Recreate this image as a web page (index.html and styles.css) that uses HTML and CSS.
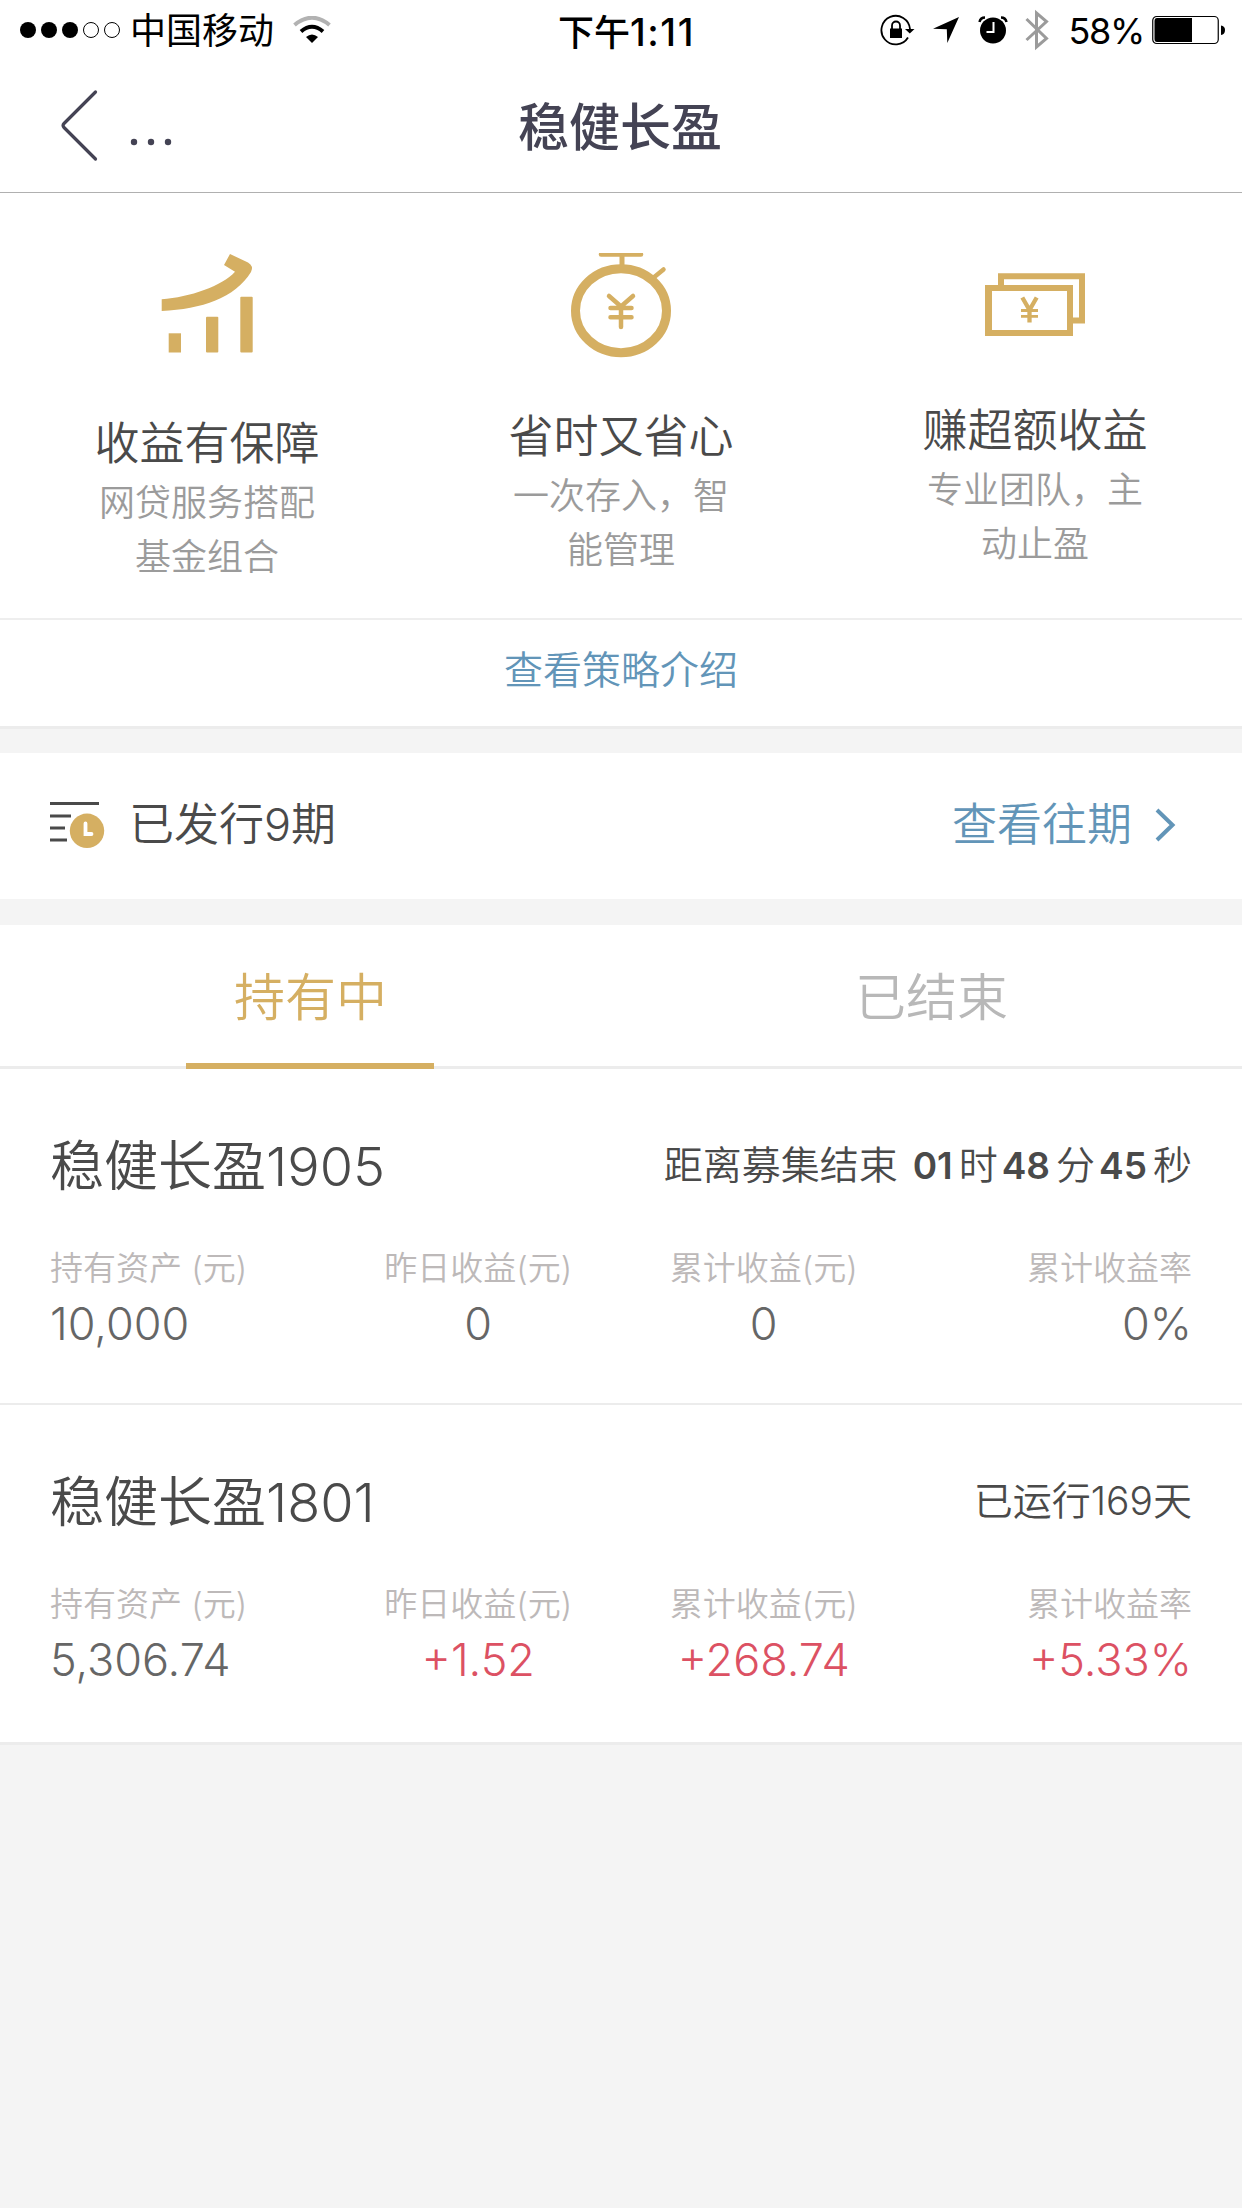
FILE: index.html
```
<!DOCTYPE html>
<html lang="zh-CN">
<head>
    <meta charset="UTF-8">
    <meta name="viewport" content="width=device-width, initial-scale=1.0">
    <title>稳健长盈</title>
    <link rel="stylesheet" href="styles.css">
</head>
<body>

<div class="status-bar">
    <div class="status-left">
        <svg class="signal" width="102" height="18" viewBox="0 0 102 18">
            <circle cx="9" cy="9" r="8"/>
            <circle cx="30" cy="9" r="8"/>
            <circle cx="51" cy="9" r="8"/>
            <circle cx="72" cy="9" r="7.5" fill="none" stroke="#000"/>
            <circle cx="93" cy="9" r="7.5" fill="none" stroke="#000"/>
        </svg>
        <span class="carrier">中国移动</span>
        <svg class="wifi" width="38" height="28" viewBox="0 0 38 28">
            <path d="M1.5 9 Q19 -5.5 36.500 9" fill="none" stroke="#b2b2b2" stroke-width="4"/>
            <path d="M8 15.500 Q19 6 30 15.500" fill="none" stroke="#000" stroke-width="4"/>
            <path d="M13 21 Q19 16 25 21 L19 27 Z"/>
        </svg>
    </div>
    <div class="status-time">下午<span class="clock">1:11</span></div>
    <div class="status-right">
        <svg class="lock" width="36" height="32" viewBox="0 0 36 32">
            <path d="M28 23.500 A14.300 14.300 0 1 1 30 15" fill="none" stroke="#000" stroke-width="1.800"/>
            <path d="M25 15 H34.500 L29.800 19.500 Z"/>
            <rect x="10" y="14.500" width="12" height="9.500"/>
            <path d="M12 15 V11.500 a4 4 0 0 1 8 0 V15" fill="none" stroke="#000" stroke-width="1.800"/>
        </svg>
        <svg class="location" width="28" height="28" viewBox="0 0 28 28">
            <path d="M27 1 L15.300 27 L14.800 13.200 L1 12.700 Z"/>
        </svg>
        <svg class="alarm" width="30" height="28" viewBox="0 0 30 28">
            <circle cx="15" cy="14.500" r="13"/>
            <path d="M1.500 6 Q2.500 1.500 7 1.500 M23 1.500 Q27.500 1.500 28.500 6" fill="none" stroke="#000" stroke-width="2.500"/>
            <path d="M15.500 6 V16 H8.500" fill="none" stroke="#fff" stroke-width="2"/>
        </svg>
        <svg class="bluetooth" width="24" height="42" viewBox="0 0 24 42">
            <path d="M1.500 10 L21.500 29.500 L11.500 38 V4 L21.500 12.500 L1.500 31" fill="none" stroke="#9b9b9b" stroke-width="3"/>
        </svg>
        <span class="percent">58%</span>
        <svg class="battery" width="74" height="30" viewBox="0 0 74 30">
            <rect x="0.750" y="1.500" width="65.500" height="27" rx="4" fill="none" stroke="#000" stroke-width="1.200"/>
            <path d="M2.500 6 Q2.500 3 5 3 H40 V27 H5 Q2.500 27 2.500 24 Z"/>
            <path d="M69 10.500 Q73 11 73 15 Q73 19.500 69 20 Z"/>
        </svg>
    </div>
</div>

<div class="header">
    <a class="back" href="#">
        <svg width="38" height="74" viewBox="0 0 38 74">
            <path d="M35.500 3 L4 34.500 Q2 36.500 4 38.500 L35.500 70" fill="none" stroke="#444354" stroke-width="3.200" stroke-linecap="round"/>
        </svg>
        <svg class="dots" width="42" height="8" viewBox="0 0 42 8">
            <circle cx="4" cy="4" r="3.200"/>
            <circle cx="21" cy="4" r="3.200"/>
            <circle cx="38" cy="4" r="3.200"/>
        </svg>
    </a>
    <h1>稳健长盈</h1>
</div>

<div class="features">
    <div class="feature">
        <div class="feature-icon">
            <svg width="94" height="101" viewBox="0 0 94 101">
                <path d="M1.700 46.300 C30 44 62 33 75 18.700 L64 12 L70 1 L88 9.500 Q94 13 91 19 C75 45 42 56 1.700 58 Z" fill="#d5af62"/>
                <rect x="8.700" y="80.300" width="12.300" height="19.200" fill="#d5af62"/>
                <rect x="46" y="63.700" width="12.300" height="35.800" rx="1" fill="#d5af62"/>
                <rect x="80.300" y="43.700" width="12.400" height="55.800" rx="1" fill="#d5af62"/>
            </svg>
        </div>
        <h3>收益有保障</h3>
        <p>网贷服务搭配基金组合</p>
    </div>
    <div class="feature feature-time">
        <div class="feature-icon">
            <svg width="102" height="106" viewBox="0 0 102 106">
                <g fill="none" stroke="#d5af62" stroke-linecap="round">
                    <ellipse cx="51" cy="57.700" rx="45.500" ry="42" stroke-width="9"/>
                    <path d="M31 1.500 H71" stroke-width="4.500"/>
                    <path d="M52 2 V14" stroke-width="5"/>
                    <path d="M84 24.300 L93.500 16.500" stroke-width="4.500"/>
                    <path d="M39 43 L51 53.500 L63 43 M51 53.500 V74 M40.500 55 H61.500 M40.500 64.300 H61.500" stroke-width="4.500"/>
                </g>
            </svg>
        </div>
        <h3>省时又省心</h3>
        <p>一次存入，智能管理</p>
    </div>
    <div class="feature feature-profit">
        <div class="feature-icon">
            <svg width="100" height="63" viewBox="0 0 100 63">
                <path d="M16 15 V3.200 H97 V47.500 H86" fill="none" stroke="#d5af62" stroke-width="6"/>
                <path d="M0 12 H88 V63 H0 Z M7 18 V57 H82 V18 Z" fill="#d5af62" fill-rule="evenodd"/>
                <path d="M37.300 24.500 L44.500 37 L51.700 24.500 M44.500 36 V49.500" fill="none" stroke="#d5af62" stroke-width="4.300"/>
                <path d="M36 37.500 H53 M36 43.300 H53" fill="none" stroke="#d5af62" stroke-width="2.800"/>
            </svg>
        </div>
        <h3>赚超额收益</h3>
        <p>专业团队，主动止盈</p>
    </div>
</div>
<a class="strategy-link" href="#">查看策略介绍</a>

<div class="issued">
    <svg class="issued-icon" width="56" height="48" viewBox="0 0 56 48">
        <path d="M0 1.500 H49" stroke="#4a4a4a" stroke-width="3.200"/>
        <path d="M0 14 H21 M0 26 H15 M0 38 H17" stroke="#4a4a4a" stroke-width="2.800"/>
        <circle cx="37" cy="28.800" r="17.200" fill="#d5af62"/>
        <path d="M35.500 21.500 V32 H41.500" fill="none" stroke="#fff" stroke-width="3.800" stroke-linecap="round"/>
    </svg>
    <span>已发行9期</span>
    <a class="history-link" href="#">查看往期
        <svg width="22" height="34" viewBox="0 0 22 34">
            <path d="M2 2 L17.500 17 L2 32" fill="none" stroke="#6295b8" stroke-width="4"/>
        </svg>
    </a>
</div>

<div class="tabs">
    <a class="tab active" href="#">持有中</a>
    <a class="tab" href="#">已结束</a>
</div>

<div class="product">
    <div class="product-top">
        <h2>稳健长盈1905</h2>
        <div class="countdown">距离募集结束 <b>01</b>时<b>48</b>分<b>45</b>秒</div>
    </div>
    <div class="product-data">
        <div class="item"><label>持有资产 (元)</label><span>10,000</span></div>
        <div class="item"><label>昨日收益(元)</label><span>0</span></div>
        <div class="item"><label>累计收益(元)</label><span>0</span></div>
        <div class="item"><label>累计收益率</label><span>0%</span></div>
    </div>
</div>

<div class="product last">
    <div class="product-top">
        <h2>稳健长盈1801</h2>
        <div class="running">已运行169天</div>
    </div>
    <div class="product-data">
        <div class="item"><label>持有资产 (元)</label><span>5,306.74</span></div>
        <div class="item"><label>昨日收益(元)</label><span class="up">+1.52</span></div>
        <div class="item"><label>累计收益(元)</label><span class="up">+268.74</span></div>
        <div class="item"><label>累计收益率</label><span class="up">+5.33%</span></div>
    </div>
</div>

</body>
</html>
```
FILE: styles.css
```
* {
    box-sizing: border-box;
}

body {
    font-family: Inter, "Noto Sans CJK SC", sans-serif;
    font-weight: 350;
    background-color: #f4f4f4;
    color: #4a4a4a;
    margin: 0;
}

h1, h2, h3, p {
    margin: 0;
}

a {
    text-decoration: none;
}

svg {
    display: block;
    flex-shrink: 0;
}

/* status bar */
.status-bar {
    display: grid;
    grid-template-columns: 1fr auto 1fr;
    height: 60px;
    padding: 0 16px 0 19px;
    background-color: #fff;
    color: #000;
    font-size: 36px;
    line-height: 64px;
    font-weight: 400;
}

.status-left, .status-right {
    display: flex;
    align-items: center;
    height: 60px;
}

.status-right {
    justify-content: flex-end;
}

.carrier {
    padding-top: 2px;
    margin-left: 9px;
}

.wifi {
    margin-left: 19px;
}

.status-time {
    padding-left: 8px;
    font-weight: 500;
}

.clock {
    font-size: 38px;
    letter-spacing: 1.5px;
}

.location {
    margin-left: 16px;
}

.alarm {
    margin-left: 18px;
}

.bluetooth {
    margin-left: 17px;
}

.percent {
    padding-top: 2px;
    margin-left: 19px;
    letter-spacing: -1.3px;
}

.battery {
    margin-left: 8px;
}

/* header */
.header {
    display: grid;
    grid-template-columns: 1fr auto 1fr;
    align-items: center;
    height: 133px;
    padding: 0 62px 0 60px;
    background-color: #fff;
    border-bottom: 1px solid #b0b0b0;
}

.back {
    display: flex;
    align-items: center;
}

.dots {
    margin: 32px 0 0 32px;
    fill: #444354;
}

.header h1 {
    padding-top: 4px;
    font-size: 51px;
    line-height: 70px;
    font-weight: 500;
    color: #444354;
}

/* features */
.features {
    display: grid;
    grid-template-columns: repeat(3, 1fr);
    height: 427px;
    background-color: #fff;
    border-bottom: 2px solid #eee;
    text-align: center;
}

.feature {
    padding-top: 60px;
}

.feature-icon {
    display: flex;
    justify-content: center;
    height: 164px;
}

.feature-time .feature-icon {
    height: 157px;
}

.feature-profit {
    padding-top: 80px;
}

.feature-profit .feature-icon {
    height: 131px;
}

.feature h3 {
    font-size: 45px;
    line-height: 54px;
    font-weight: 350;
}

.feature p {
    width: 220px;
    margin: 5px auto 0;
    font-size: 36px;
    line-height: 54px;
    color: #9b9b9b;
}

.strategy-link {
    display: block;
    height: 109px;
    background-color: #fff;
    border-bottom: 3px solid #ececec;
    color: #6295b8;
    font-size: 39px;
    line-height: 100px;
    text-align: center;
}

/* issued periods */
.issued {
    display: flex;
    align-items: center;
    height: 146px;
    margin: 24px 0 26px;
    padding: 0 65px 2px 50px;
    background-color: #fff;
    font-size: 45px;
    line-height: 60px;
}

.issued-icon {
    margin: 2px 23px 0 0;
}

.history-link {
    display: flex;
    align-items: center;
    gap: 23px;
    margin-left: auto;
    color: #6295b8;
}

/* tabs */
.tabs {
    display: flex;
    height: 144px;
    background-color: #fff;
    border-bottom: 3px solid #ececec;
}

.tab {
    display: flex;
    flex: 1;
    flex-direction: column;
    align-items: center;
    font-size: 51px;
    line-height: 146px;
    color: #b8b8b8;
}

.tab.active {
    color: #d5af62;
}

.tab.active::after {
    content: "";
    flex-shrink: 0;
    width: 248px;
    height: 6px;
    margin: -8px 1px 0 0;
    background-color: #d5af62;
}

/* products */
.product {
    height: 336px;
    padding: 60px 50px 0;
    background-color: #fff;
    border-bottom: 2px solid #ececec;
}

.product.last {
    height: 340px;
    border-bottom: 3px solid #ececec;
}

.product-top {
    display: flex;
    justify-content: space-between;
    height: 72px;
    line-height: 72px;
}

.product h2 {
    font-size: 54px;
    line-height: 76px;
    font-weight: 350;
}

.countdown, .running {
    font-size: 39px;
}

.countdown b {
    margin: 0 6px 0 4px;
    font-size: 37px;
    font-weight: 600;
}

.product-data {
    display: grid;
    grid-template-columns: repeat(4, 1fr);
    margin-top: 43px;
    text-align: center;
}

.item {
    display: flex;
    flex-direction: column;
}

.item:first-child {
    text-align: left;
}

.item:last-child {
    text-align: right;
}

.item label {
    font-size: 33px;
    line-height: 48px;
    color: #bdb9b9;
}

.item span {
    margin-top: 4px;
    font-size: 45px;
    line-height: 56px;
    color: #666;
}

.item .up {
    color: #dc5163;
}
```
